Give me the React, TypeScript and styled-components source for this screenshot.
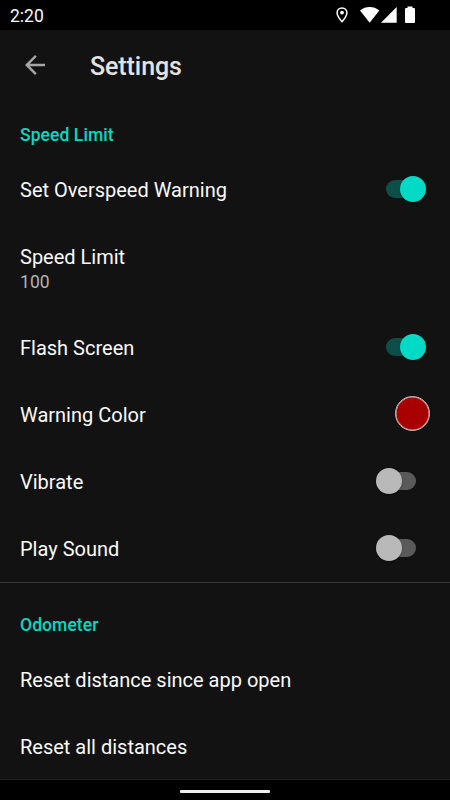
import React from "react";
import styled, { createGlobalStyle } from "styled-components";

const GlobalStyle = createGlobalStyle`
  * { box-sizing: border-box; }
  body { margin: 0; background: #000; }
`;

const Screen = styled.div`
  width: 450px;
  height: 800px;
  display: flex;
  flex-direction: column;
  overflow: hidden;
  background: #121212;
  color: #fafafa;
  font-family: Roboto, sans-serif;
`;

const StatusBar = styled.header`
  height: 30px;
  flex: none;
  display: flex;
  align-items: center;
  justify-content: space-between;
  padding: 0 30px 0 10px;
  background: #000;
`;

const Clock = styled.span`
  font-size: 17.5px;
  line-height: 30px;
  padding-top: 1px;
`;

const StatusIcons = styled.svg`
  display: block;
  width: 90px;
  height: 30px;
`;

const AppBar = styled.div`
  height: 70px;
  flex: none;
  display: flex;
  align-items: center;
  padding-left: 20px;
`;

const BackButton = styled.button`
  width: 30px;
  height: 30px;
  padding: 0;
  border: 0;
  background: none;

  svg {
    display: block;
  }
`;

const Title = styled.h1`
  margin: 3px 0 0 40px;
  font-size: 25px;
  line-height: 30px;
  font-weight: 500;
  letter-spacing: -0.08px;
  color: #e3e3e3;
`;

const List = styled.main`
  flex: 1;
  min-height: 0;
  overflow: hidden;
`;

const Section = styled.section<{ $divided?: boolean }>`
  border-top: ${(p) => (p.$divided ? "1px solid #373737" : "0")};
  padding-top: ${(p) => (p.$divided ? "24px" : "17px")};
`;

const SectionTitle = styled.h2`
  margin: 0 0 2px;
  padding-left: 20px;
  height: 36px;
  font-size: 17.5px;
  line-height: 37px;
  font-weight: 500;
  letter-spacing: 0.08px;
  color: #03dac5;
`;

const Row = styled.div<{ $tall?: boolean }>`
  height: ${(p) => (p.$tall ? "91px" : "67px")};
  display: flex;
  align-items: center;
  justify-content: space-between;
  padding: 0 20px;

  &:last-child {
    height: 68px;
  }
`;

const Label = styled.div`
  padding-top: 2px;
  font-size: 20px;
  line-height: 26px;
`;

const Value = styled.div`
  font-size: 17.5px;
  line-height: 24px;
  letter-spacing: 0.1px;
  color: #b3b3b3;
`;

const Switch = styled.div<{ $on?: boolean }>`
  width: 50px;
  height: 26px;
  margin-right: 4px;
  padding: 0 10px;
  display: flex;
  align-items: center;
  color: ${(p) => (p.$on ? "#03dac5" : "#b9b9b9")};
`;

const Track = styled.div<{ $on?: boolean }>`
  width: 30px;
  height: 18px;
  flex: none;
  display: flex;
  align-items: center;
  justify-content: ${(p) => (p.$on ? "flex-end" : "flex-start")};
  border-radius: 9px;
  background: ${(p) => (p.$on ? "#0e4e48" : "#5a5a5a")};
`;

const Thumb = styled.div`
  width: 26px;
  height: 26px;
  flex: none;
  margin: 0 -10px;
  border-radius: 50%;
  background: currentColor;
  box-shadow: 0 1px 2px rgba(0, 0, 0, 0.35);
`;

const Swatch = styled.div`
  width: 35px;
  height: 35px;
  border: 1px solid #c6bcbc;
  border-radius: 50%;
  background: #a80000;
  box-shadow: inset 0 0 0 0.5px #c6bcbc;
`;

const NavigationBar = styled.footer`
  height: 21px;
  flex: none;
  display: flex;
  justify-content: center;
  padding-top: 10px;
  border-top: 1px solid #232323;
  background: #000;
`;

const HomeHandle = styled.div`
  width: 90px;
  height: 3px;
  border-radius: 1px;
  background: #eee;
`;

function Toggle({ on = false }: { on?: boolean }) {
  return (
    <Switch $on={on} role="switch" aria-checked={on}>
      <Track $on={on}>
        <Thumb />
      </Track>
    </Switch>
  );
}

export default function App() {
  return (
    <>
      <GlobalStyle />
      <Screen>
        <StatusBar>
          <Clock>2:20</Clock>
          <StatusIcons viewBox="330 0 90 30" fill="#fff">
            <path
              d="M342 7.900c-2.800 0-4.900 2.100-4.900 4.800 0 3.400 4.900 9 4.900 9s4.900-5.600 4.900-9c0-2.700-2.100-4.800-4.900-4.800z"
              fill="none"
              stroke="#fff"
              strokeWidth="1.500"
            />
            <circle cx="342" cy="12.600" r="1.900" />
            <path d="M360 10.400Q364.400 7 369.700 7T379.300 10.400L369.700 22.700z" />
            <path d="M396.700 7v15.700H381z" />
            <path d="M407.500 6.500h5V8h1.500q1 0 1 1v13q0 1-1 1h-8q-1 0-1-1V9q0-1 1-1h1.500z" />
          </StatusIcons>
        </StatusBar>
        <AppBar>
          <BackButton aria-label="Back">
            <svg width="30" height="30" viewBox="0 0 30 30" fill="#a5a5a5">
              <path d="M25 13.800H9.800l6.900-7L15 5 5 15l10 10 1.750-1.750-6.950-7H25z" />
            </svg>
          </BackButton>
          <Title>Settings</Title>
        </AppBar>
        <List>
          <Section>
            <SectionTitle>Speed Limit</SectionTitle>
            <Row><Label>Set Overspeed Warning</Label><Toggle on /></Row>
            <Row $tall>
              <div>
                <Label>Speed Limit</Label>
                <Value>100</Value>
              </div>
            </Row>
            <Row><Label>Flash Screen</Label><Toggle on /></Row>
            <Row><Label>Warning Color</Label><Swatch /></Row>
            <Row><Label>Vibrate</Label><Toggle /></Row>
            <Row><Label>Play Sound</Label><Toggle /></Row>
          </Section>
          <Section $divided>
            <SectionTitle>Odometer</SectionTitle>
            <Row><Label>Reset distance since app open</Label></Row>
            <Row><Label>Reset all distances</Label></Row>
          </Section>
        </List>
        <NavigationBar>
          <HomeHandle />
        </NavigationBar>
      </Screen>
    </>
  );
}
